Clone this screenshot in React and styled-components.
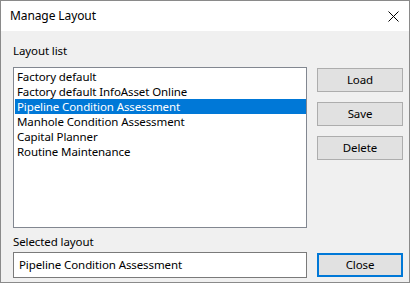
import React from "react";
import styled, { createGlobalStyle } from "styled-components";

const Global = createGlobalStyle`
  html, body { margin: 0; padding: 0; background: #ffffff; }
  * { box-sizing: border-box; }
`;

const Window = styled.div`
  width: 410px;
  height: 283px;
  border: 1px solid #8a8a8a;
  display: flex;
  flex-direction: column;
  font-family: "Noto Sans", "Open Sans", sans-serif;
  font-size: 11.5px;
  letter-spacing: -0.1px;
  color: #000;
  background: #f0f0f0;
  overflow: hidden;
`;

const TitleBar = styled.div`
  height: 30px;
  flex: none;
  background: #ffffff;
  display: flex;
  align-items: center;
  justify-content: space-between;
  padding: 0 10px 0 9px;
`;

const Title = styled.span`
  font-size: 12px;
  line-height: 16px;
`;

const CloseX = styled.svg`
  width: 11px;
  height: 11px;
  margin-top: 1px;
`;

const Body = styled.div`
  flex: 1;
  display: grid;
  grid-template-columns: 294px 86px;
  grid-template-rows: auto auto auto auto;
  align-content: start;
  column-gap: 10px;
  padding: 12px 0 0 12px;
`;

const Label = styled.div`
  line-height: 16px;
  height: 16px;
  grid-column: 1;
  margin-top: ${(p) => p.$mt || 0}px;
`;

const List = styled.div`
  grid-column: 1;
  grid-row: 2;
  margin-top: 8px;
  height: 161px;
  background: #fff;
  border: 1px solid #828790;
  padding: 1px 0 1px 1px;
  display: flex;
  flex-direction: column;
`;

const Item = styled.div`
  height: 15px;
  line-height: 15px;
  padding-left: 2px;
  white-space: nowrap;
  background: ${(p) => (p.$selected ? "#0078d7" : "transparent")};
  color: ${(p) => (p.$selected ? "#ffffff" : "#000000")};
`;

const ButtonCol = styled.div`
  grid-column: 2;
  grid-row: 2;
  margin-top: 9px;
  display: flex;
  flex-direction: column;
  gap: 10px;
`;

const Button = styled.div`
  height: 24px;
  width: 86px;
  background: #e1e1e1;
  border: ${(p) => (p.$default ? "2px solid #0078d7" : "1px solid #adadad")};
  display: flex;
  align-items: center;
  justify-content: center;
  line-height: 16px;
`;

const InputBox = styled.div`
  grid-column: 1;
  grid-row: 4;
  margin-top: 2px;
  height: 26px;
  background: #fff;
  border: 1px solid #7a7a7a;
  display: flex;
  align-items: center;
  padding-left: 5px;
  line-height: 16px;
`;

const CloseCell = styled.div`
  grid-column: 2;
  grid-row: 4;
  margin-top: 3px;
`;

const items = [
  "Factory default",
  "Factory default InfoAsset Online",
  "Pipeline Condition Assessment",
  "Manhole Condition Assessment",
  "Capital Planner",
  "Routine Maintenance",
];

export default function App() {
  return (
    <>
      <Global />
      <Window>
        <TitleBar>
          <Title>Manage Layout</Title>
          <CloseX viewBox="0 0 11 11">
            <path d="M0.5 0.5 L10.5 10.5 M10.5 0.5 L0.5 10.5" stroke="#000" strokeWidth="1" fill="none" />
          </CloseX>
        </TitleBar>
        <Body>
          <Label>Layout list</Label>
          <List>
            {items.map((t) => (
              <Item key={t} $selected={t === "Pipeline Condition Assessment"}>
                {t}
              </Item>
            ))}
          </List>
          <ButtonCol>
            <Button>Load</Button>
            <Button>Save</Button>
            <Button>Delete</Button>
          </ButtonCol>
          <Label $mt={6}>Selected layout</Label>
          <InputBox>Pipeline Condition Assessment</InputBox>
          <CloseCell>
            <Button $default>Close</Button>
          </CloseCell>
        </Body>
      </Window>
    </>
  );
}
